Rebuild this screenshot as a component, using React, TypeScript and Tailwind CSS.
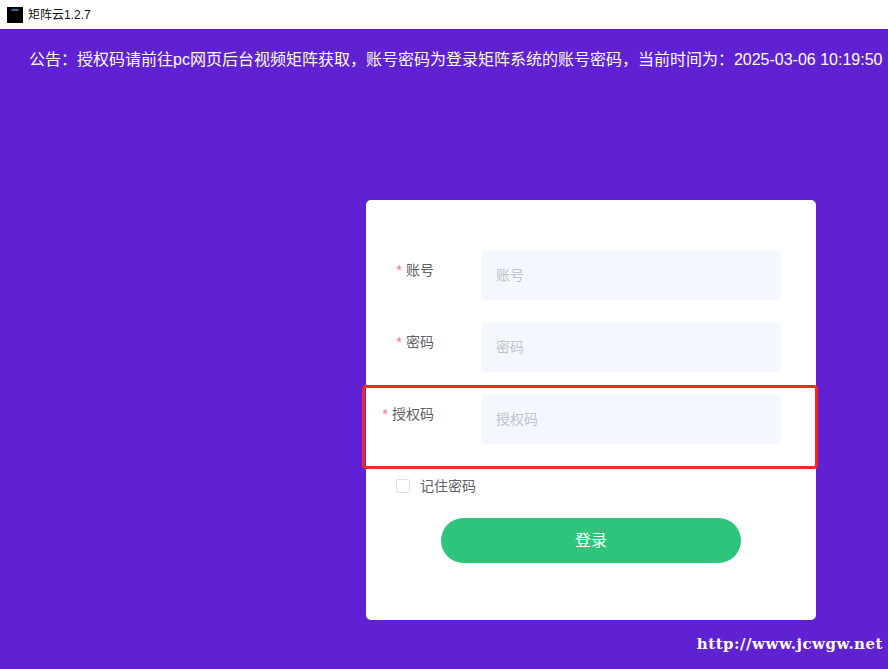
import React from 'react';

const fontStack = 'font-["Liberation_Sans","Noto_Sans_CJK_SC",sans-serif]';

const FormRow: React.FC<{ label: string }> = ({ label }) => (
    <div className="flex mb-[22px]">
        <label className="w-[68px] shrink-0 text-right text-[14px] leading-[40px] text-[#606266]">
            <span className="text-[#fb6b7d] mr-[4px]">*</span>
            {label}
        </label>
        <input
            placeholder={label}
            className="ml-[47px] w-[300px] h-[50px] rounded-[5px] bg-[#f4f7fd] px-[15px] text-[14px] placeholder:text-[#c0c4cc] outline-none"
        />
    </div>
);

export default function App() {
    return (
        <div className={`relative w-[888px] h-[669px] overflow-hidden bg-[#6021d3] ${fontStack}`}>
            {/* Title bar */}
            <div className="flex items-center h-[29px] bg-white pl-[7px]">
                <div className="flex justify-center w-[16px] h-[16px] bg-black pt-[2px]">
                    <div className="w-[8px] h-[2px] rounded-t-full bg-[#2a6f97]" />
                </div>
                <span className="ml-[5px] text-[12px] text-[#111]">矩阵云1.2.7</span>
            </div>

            {/* Notice */}
            <p className="mt-[20px] pl-[29px] whitespace-nowrap text-[16px] leading-[22px] text-white">
                公告：授权码请前往pc网页后台视频矩阵获取，账号密码为登录矩阵系统的账号密码，当前时间为：2025-03-06 10:19:50
            </p>

            {/* Login card */}
            <div className="ml-[366px] mt-[129px] w-[450px] h-[420px] rounded-[5px] bg-white pt-[50px]">
                <FormRow label="账号" />
                <FormRow label="密码" />
                <FormRow label="授权码" />
                <div className="flex items-center ml-[30px] mt-[35px]">
                    <span className="w-[14px] h-[14px] rounded-[2px] border border-[#dcdfe6] bg-white" />
                    <span className="ml-[10px] text-[14px] leading-[14px] text-[#606266]">记住密码</span>
                </div>
                <button className="block ml-[75px] mt-[25px] w-[300px] h-[45px] rounded-[22.5px] bg-[#2fc47b] text-[16px] text-white">
                    登录
                </button>
            </div>

            {/* Highlight drawn over the screenshot */}
            <div className="absolute left-[362px] top-[385px] w-[456px] h-[84px] rounded-[4px] border-[3px] border-[#f5281f]" />

            {/* Watermark */}
            <span className='absolute right-[5px] top-[634px] font-["DejaVu_Serif",serif] font-bold text-[15px] leading-[20px] tracking-[0.5px] text-white'>
                http://www.jcwgw.net
            </span>
        </div>
    );
}
